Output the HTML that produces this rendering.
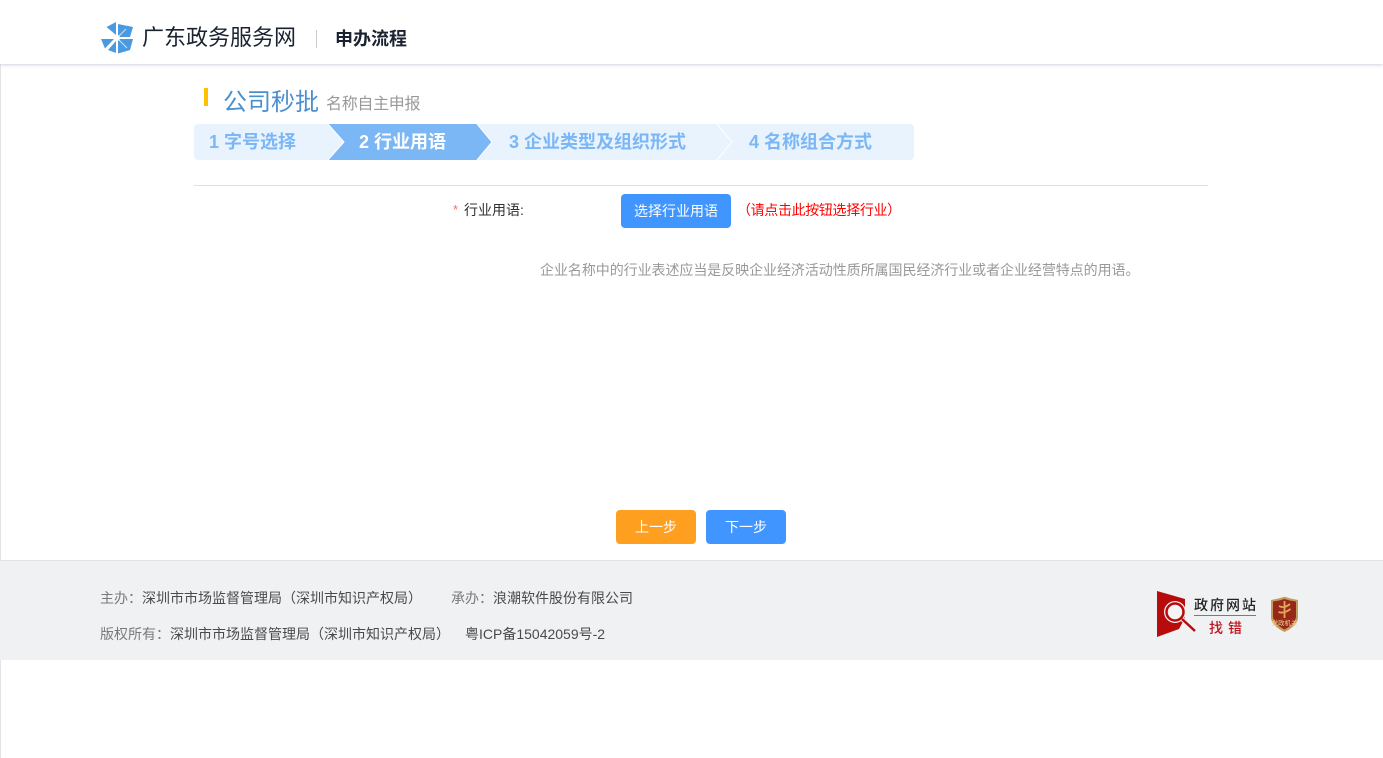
<!DOCTYPE html>
<html lang="zh-CN">
<head>
<meta charset="utf-8">
<title>申办流程</title>
<style>
html,body{margin:0;padding:0;background:#fff}
body{position:relative;width:1383px;height:758px;overflow:hidden;font-family:"Liberation Sans","Noto Sans CJK SC",sans-serif}
.a{position:absolute;white-space:nowrap}
#edge{left:0;top:0;width:1px;height:758px;background:#e3e4e8}
#head{left:0;top:0;width:1383px;height:64px;background:#fff;box-shadow:0 1px 3px rgba(120,125,160,.35)}
.btn{position:absolute;border-radius:4px;color:#fff;text-align:center;font-size:14px}
.st{position:absolute;top:131px;line-height:22px;font-size:18px;font-weight:700;color:#7cb7f5;white-space:nowrap}
</style>
</head>
<body>
<div class="a" id="edge"></div>
<div class="a" id="head"></div>
<svg class="a" style="left:100px;top:21px" width="34" height="34" viewBox="-17 -17 34 34">
<g fill="#4a9ae0">
<path d="M-1 -3 L-1 -16 L-10.500 -11 Z"/>
<path d="M1 -3 L1 -14 L16 -11 L13 -1 L3 -1 Z"/>
<path d="M3 1 L16 1 L13 12 L1 15.500 L1 3 Z"/>
<path d="M-3 1 L-16 1 L-12 10.500 Z"/>
<path d="M-1 3 L-1 15 L-9 12 Z"/>
</g>
<g stroke="#cfe4f6" stroke-width="1"><path d="M0 0 L9 -9 M0 0 L10 10"/></g>
<rect x="-2.500" y="-2.500" width="5" height="5" fill="#fff"/>
</svg>
<div class="a" style="left:142px;top:21px;font-size:22px;line-height:34px;color:#1a2230">广东政务服务网</div>
<div class="a" style="left:316px;top:30px;width:1px;height:18px;background:#c9ccd0"></div>
<div class="a" style="left:335px;top:27px;font-size:18px;line-height:24px;font-weight:700;color:#1a2230">申办流程</div>

<div class="a" style="left:204px;top:88px;width:4px;height:18px;background:#ffc000"></div>
<div class="a" style="left:223px;top:86px;font-size:24px;line-height:34px;color:#4a8fd0">公司秒批</div>
<div class="a" style="left:326px;top:94px;font-size:16px;line-height:22px;color:#999;letter-spacing:-.3px">名称自主申报</div>

<svg class="a" style="left:194px;top:124px" width="720" height="36" viewBox="0 0 720 36">
<rect width="720" height="36" rx="4" fill="#e8f3fe"/>
<path d="M134 0 L283 0 L298 18 L283 36 L134 36 L150 18 Z" fill="#7cb7f5"/>
<path d="M134 0 L150 18 L134 36" fill="none" stroke="#fff" stroke-width="1"/>
<path d="M283 0 L298 18 L283 36" fill="none" stroke="#fff" stroke-width="1"/>
<path d="M523 0 L538 18 L523 36" fill="none" stroke="#fff" stroke-width="1"/>
</svg>
<div class="st" style="left:209px">1 字号选择</div>
<div class="st" style="left:359px;color:#fff">2 行业用语</div>
<div class="st" style="left:509px">3 企业类型及组织形式</div>
<div class="st" style="left:749px">4 名称组合方式</div>

<div class="a" style="left:194px;top:185px;width:1014px;height:1px;background:#dcdfe6"></div>

<div class="a" style="left:453px;top:200px;font-size:13px;line-height:20px;color:#f56c6c">*</div>
<div class="a" style="left:464px;top:200px;font-size:14px;line-height:20px;color:#303133">行业用语:</div>
<div class="btn" style="left:621px;top:194px;width:110px;height:34px;line-height:34px;background:#4095ff;font-size:14px">选择行业用语</div>
<div class="a" style="left:737px;top:200px;font-size:14px;line-height:20px;color:#f00;letter-spacing:-.35px">（请点击此按钮选择行业）</div>
<div class="a" style="left:540px;top:260px;font-size:14px;line-height:20px;color:#999;letter-spacing:-.06px">企业名称中的行业表述应当是反映企业经济活动性质所属国民经济行业或者企业经营特点的用语。</div>

<div class="btn" style="left:616px;top:510px;width:80px;height:34px;line-height:34px;background:#ff9f1f">上一步</div>
<div class="btn" style="left:706px;top:510px;width:80px;height:34px;line-height:34px;background:#4095ff">下一步</div>

<div class="a" style="left:0;top:560px;width:1383px;height:100px;background:#f0f1f3;border-top:1px solid #dfe1e5;box-sizing:border-box"></div>
<div class="a" style="left:100px;top:588px;font-size:14px;line-height:20px;color:#4a4a4a"><span style="color:#7a7a7a">主办：</span>深圳市市场监督管理局（深圳市知识产权局）</div>
<div class="a" style="left:451px;top:588px;font-size:14px;line-height:20px;color:#4a4a4a"><span style="color:#7a7a7a">承办：</span>浪潮软件股份有限公司</div>
<div class="a" style="left:100px;top:624px;font-size:14px;line-height:20px;color:#4a4a4a"><span style="color:#7a7a7a">版权所有：</span>深圳市市场监督管理局（深圳市知识产权局）</div>
<div class="a" style="left:465px;top:624px;font-size:14px;line-height:20px;color:#4a4a4a">粤ICP备15042059号-2</div>

<svg class="a" style="left:1150px;top:586px" width="50" height="54" viewBox="0 0 50 54">
<path d="M7 5 L35 13 L35 32 L29 43 L7 51 Z" fill="#b80c0c"/>
<circle cx="25" cy="26" r="11" fill="#f0f1f3"/>
<circle cx="25" cy="26" r="8.500" fill="#f4f4f5" stroke="#b80c0c" stroke-width="2.500"/>
<path d="M32 33 L45 45" stroke="#f0f1f3" stroke-width="4.500"/>
<path d="M32 33 L45 45" stroke="#b80c0c" stroke-width="2.500"/>
</svg>
<div class="a" style="left:1194px;top:596px;font-size:14px;line-height:18px;font-weight:500;color:#222;letter-spacing:2px">政府网站</div>
<div class="a" style="left:1194px;top:615px;width:62px;height:1px;background:#d8505c"></div>
<div class="a" style="left:1209px;top:619px;font-size:14px;line-height:18px;font-weight:500;color:#c0141c;letter-spacing:5px">找错</div>
<svg class="a" style="left:1269px;top:596px" width="31" height="37" viewBox="0 0 31 37">
<path d="M2 4 Q9 3 15.500 0.800 Q22 3 29 4 L29 22 Q28 30 15.500 36 Q3 30 2 22 Z" fill="#c59a5e"/>
<path d="M4 5.500 Q10 5 15.500 3 Q21 5 27 5.500 L27 21 Q26 28 15.500 33.500 Q5 28 4 21 Z" fill="#96281a"/>
<path d="M15.500 5 V22 M10 10 Q15 13 21 8 M9.500 16 Q15 18 21.500 13" stroke="#e2a55c" stroke-width="1.800" fill="none"/>
<text x="15.500" y="29" font-size="6.500" fill="#f2d08a" text-anchor="middle" font-family="Liberation Sans,Noto Sans CJK SC,sans-serif">党政机关</text>
</svg>
</body>
</html>
